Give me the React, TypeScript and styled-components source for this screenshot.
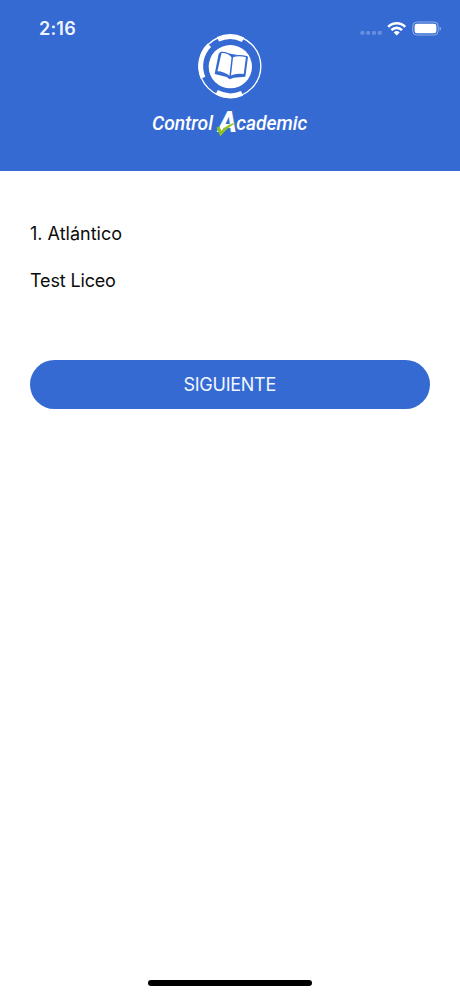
import React from "react";
import styled, { createGlobalStyle } from "styled-components";

const BLUE = "#366ad3";

const GlobalStyle = createGlobalStyle`
  *, *::before, *::after { box-sizing: border-box; }
  body { margin: 0; background: #fff; }
`;

const Screen = styled.div`
  display: flex;
  flex-direction: column;
  width: 460px;
  height: 996px;
  overflow: hidden;
  background: #fff;
  color: #0c0c0c;
  font-family: Inter, "Liberation Sans", sans-serif;
`;

const Header = styled.header`
  position: relative;
  flex: none;
  height: 170.5px;
  padding-top: 28px;
  display: flex;
  flex-direction: column;
  align-items: center;
  background: ${BLUE};
  color: #fff;
`;

const StatusBar = styled.div`
  position: absolute;
  inset: 0 0 auto 0;
  height: 58px;
  padding: 0 18px 0 39px;
  display: flex;
  align-items: center;
  justify-content: space-between;
`;

const Clock = styled.time`
  font-size: 18px;
  font-weight: 600;
  line-height: 22px;
  letter-spacing: 0.2px;
  color: #eef5ff;
`;

const Emblem = styled.svg`
  display: block;
  width: 80px;
  height: 76px;
`;

const Wordmark = styled.div`
  position: relative;
  display: flex;
  align-items: baseline;
  width: 156px;
  height: 34px;
  line-height: 34px;
  font-family: Roboto, sans-serif;
  font-style: italic;
  font-weight: 500;
`;

const Word = styled.span`
  font-size: 19.3px;
  letter-spacing: -0.05px;
`;

const Initial = styled.span`
  position: relative;
  top: 2px;
  font-size: 28.5px;
  font-weight: 800;
  width: 18px;
  margin: 0 0 0 5.5px;
`;

const Tick = styled.svg`
  position: absolute;
  left: 64px;
  top: 17px;
  width: 24px;
  height: 16px;
`;

const Form = styled.main`
  flex: 1;
  display: flex;
  flex-direction: column;
  padding: 50px 30px 0 29.5px;
`;

const Field = styled.div<{ $tracking?: number }>`
  height: 47px;
  padding: 1px 0 0 0.5px;
  line-height: 24px;
  font-size: 18px;
  letter-spacing: ${(p) => p.$tracking ?? 0}px;
`;

const NextButton = styled.button`
  margin-top: 45px;
  height: 49px;
  border: 0;
  border-radius: 25px;
  background: ${BLUE};
  color: #f0f7ff;
  font: 400 18px/49px Inter, "Liberation Sans", sans-serif;
  letter-spacing: -0.25px;
  padding: 0;
`;

const HomeArea = styled.footer`
  display: flex;
  justify-content: center;
  height: 16.5px;
`;

const HomeIndicator = styled.div`
  width: 164px;
  height: 6px;
  border-radius: 3px;
  background: #000;
`;

const StatusIcons = () => (
  <svg width="82" height="20" viewBox="0 0 82 20" fill="none">
    <g fill="#fff" opacity="0.25">
      <rect x="0.5" y="12" width="3.8" height="3.8" rx="1.2" />
      <rect x="6.3" y="12" width="3.8" height="3.8" rx="1.2" />
      <rect x="12.1" y="12" width="3.8" height="3.8" rx="1.2" />
      <rect x="17.9" y="12" width="3.8" height="3.8" rx="1.2" />
    </g>
    <g stroke="#fff" strokeWidth="2.6">
      <path d="M28.2 7.8a12 12 0 0 1 17 0" />
      <path d="M31.4 11.1a7.5 7.5 0 0 1 10.6 0" />
    </g>
    <path d="M33.7 13.4a4.3 4.3 0 0 1 6 0l-3 3.1z" fill="#fff" />
    <rect x="52.8" y="3" width="25.4" height="13" rx="4" stroke="#fff" strokeOpacity="0.45" />
    <rect x="54.6" y="4.7" width="21.8" height="9.6" rx="2.4" fill="#fff" />
    <path d="M79.6 7.4v4.4c1.8-.8 1.8-3.6 0-4.4z" fill="#fff" fillOpacity="0.5" />
  </svg>
);

const BookEmblem = () => (
  <Emblem viewBox="0 0 240 228" fill="none">
    <circle cx="120" cy="115" r="92.5" stroke="#fff" strokeWidth="4" />
    <g stroke="#fff" strokeWidth="15">
      <path d="M84 34A88 88 0 0 1 159 35" />
      <path d="M58 52A88 88 0 0 0 39 149" />
      <path d="M80 193A88 88 0 0 0 156 196" />
    </g>
    <circle cx="121" cy="116" r="65" fill="#fff" />
    <path
      d="M86 77L74 138L110 147L119 154L131 149L166 146L174 86L164 85L92 72z"
      fill={BLUE}
    />
    <path
      d="M93 73C107 72 118 77 127 87C140 81 154 82 170 86L163 140C146 138 131 139 120 147C109 137 96 132 80 131z"
      fill="#fff"
      stroke={BLUE}
      strokeWidth="4"
      strokeLinejoin="round"
    />
    <path d="M127 87L120 149" stroke={BLUE} strokeWidth="4.5" />
  </Emblem>
);

export default function App() {
  return (
    <Screen>
      <GlobalStyle />
      <Header>
        <StatusBar>
          <Clock>2:16</Clock>
          <StatusIcons />
        </StatusBar>
        <BookEmblem />
        <Wordmark>
          <Word>Control</Word>
          <Initial>A</Initial>
          <Word>cademic</Word>
          <Tick viewBox="0 0 24 16">
            <path
              d="M0.5 6.5L3.5 5.5L5.4 9.8C9.5 5.5 14 2.6 20 2C14 5 9 9.5 4.3 15.3Z"
              fill="#8fc31f"
            />
          </Tick>
        </Wordmark>
      </Header>
      <Form>
        <Field>1. Atlántico</Field>
        <Field $tracking={-0.15}>Test Liceo</Field>
        <NextButton type="button">SIGUIENTE</NextButton>
      </Form>
      <HomeArea>
        <HomeIndicator />
      </HomeArea>
    </Screen>
  );
}
